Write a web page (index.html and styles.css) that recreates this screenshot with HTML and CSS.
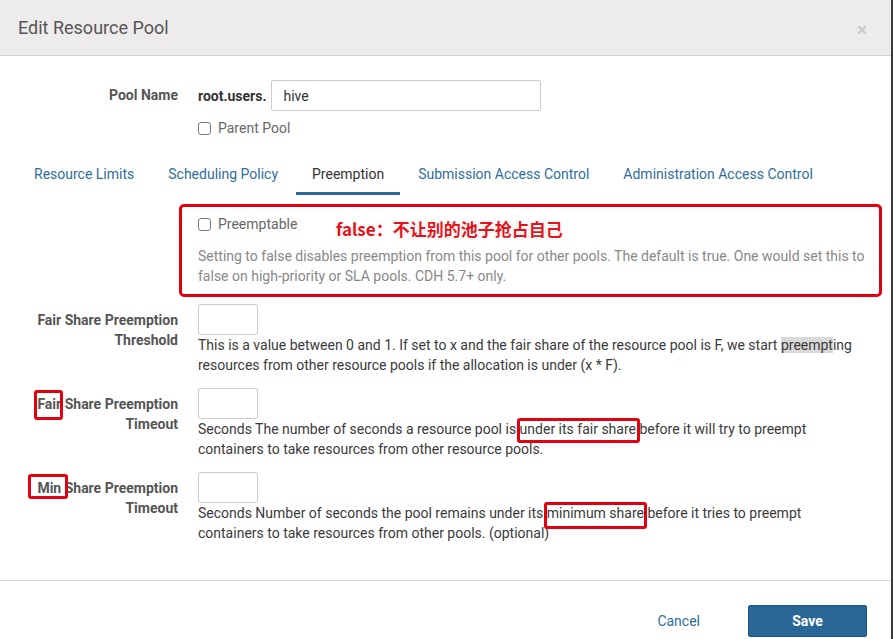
FILE: index.html
```html
<!DOCTYPE html>
<html lang="en">
<head>
<meta charset="utf-8">
<title>Edit Resource Pool</title>
<link rel="stylesheet" href="styles.css">
</head>
<body>
<div class="modal">
  <div class="modal-header">
    <h4 class="modal-title">Edit Resource Pool</h4>
    <span class="close">&times;</span>
  </div>
  <div class="modal-body">
    <div class="form-row">
      <label class="row-label pool-label">Pool Name</label>
      <div class="row-content">
        <div class="name-line">
          <span class="prefix">root.users.</span>
          <input class="text-input name-input" type="text" value="hive">
        </div>
        <label class="check check-parent"><span class="box"></span>Parent Pool</label>
      </div>
    </div>

    <ul class="tabs">
      <li><a class="tab">Resource Limits</a></li>
      <li><a class="tab">Scheduling Policy</a></li>
      <li><a class="tab active">Preemption</a></li>
      <li><a class="tab">Submission Access Control</a></li>
      <li><a class="tab">Administration Access Control</a></li>
    </ul>

    <div class="annot-box">
      <label class="check"><span class="box"></span>Preemptable</label>
      <span class="annot-text">false：不让别的池子抢占自己</span>
      <p class="muted-help">Setting to false disables preemption from this pool for other pools. The default is true. One would set this to false on high-priority or SLA pools. CDH 5.7+ only.</p>
    </div>

    <div class="fields">
      <div class="form-row field-row">
        <label class="row-label">Fair Share Preemption Threshold</label>
        <div class="row-content">
          <input class="text-input small-input" type="text">
          <p class="help">This is a value between 0 and 1. If set to x and the fair share of the resource pool is F, we start <span class="hl">preempt</span>ing resources from other resource pools if the allocation is under (x * F).</p>
        </div>
      </div>
      <div class="form-row field-row">
        <label class="row-label"><span class="mark mark-fair">Fair</span> Share Preemption Timeout</label>
        <div class="row-content">
          <input class="text-input small-input" type="text">
          <p class="help">Seconds The number of seconds a resource pool is <span class="mark mark-under">under its fair share</span> before it will try to preempt containers to take resources from other resource pools.</p>
        </div>
      </div>
      <div class="form-row field-row">
        <label class="row-label"><span class="mark mark-min">Min</span> Share Preemption Timeout</label>
        <div class="row-content">
          <input class="text-input small-input" type="text">
          <p class="help">Seconds Number of seconds the pool remains under its <span class="mark mark-minimum">minimum share</span> before it tries to preempt containers to take resources from other pools. (optional)</p>
        </div>
      </div>
    </div>
  </div>
  <div class="modal-footer">
    <a class="btn-link">Cancel</a>
    <button class="btn-primary" type="button">Save</button>
  </div>
</div>
</body>
</html>
```

FILE: styles.css
```css
* { box-sizing: border-box; }
html, body { margin: 0; padding: 0; }
body {
  font-family: Roboto, "Noto Sans", "Liberation Sans", sans-serif;
  font-size: 14px;
  color: #333;
  background: #fff;
  width: 893px;
  height: 639px;
  overflow: hidden;
}
.modal {
  width: 893px;
  height: 639px;
  border-right: 2px solid #3c3c3c;
  display: flex;
  flex-direction: column;
}
.modal-header {
  height: 56px;
  flex: none;
  background: #edebec;
  border-bottom: 1px solid #d2d2d2;
  display: flex;
  align-items: center;
  justify-content: space-between;
  padding: 0 24px 0 18px;
}
.modal-title {
  margin: 0;
  font-size: 18px;
  font-weight: 400;
  color: #555;
  line-height: 24px;
}
.close {
  font-size: 19px;
  font-weight: 700;
  color: #cacaca;
  line-height: 1;
  margin-top: 4px;
}
.modal-body {
  flex: 1;
  padding-top: 24px;
}
.form-row {
  display: flex;
  align-items: flex-start;
}
.row-label {
  flex: none;
  width: 178px;
  padding-left: 30px;
  margin-right: 20px;
  text-align: right;
  font-weight: 700;
  font-size: 14px;
  color: #555;
  line-height: 20px;
}
.pool-label { line-height: 31px; }
.row-content { flex: 1; }
.field-row .row-content { padding-right: 30px; }
.name-line {
  display: flex;
  align-items: center;
}
.prefix {
  font-weight: 700;
  color: #333;
  font-size: 14px;
  margin-right: 4px;
}
.text-input {
  display: block;
  height: 31px;
  border: 1px solid #cbcbcb;
  border-radius: 2px;
  background: #fff;
  font-family: inherit;
  font-size: 14px;
  color: #333;
  outline: none;
}
.name-input {
  width: 270px;
  padding: 0 12px;
}
.small-input {
  width: 60px;
  padding: 0 6px;
}
.check {
  display: flex;
  align-items: center;
  height: 20px;
  font-size: 14px;
  color: #666;
}
.check-parent { margin-top: 7px; }
.box {
  width: 13px;
  height: 13px;
  border: 1px solid #7a7a7a;
  border-radius: 3px;
  background: #fff;
  margin-right: 7px;
}
.tabs {
  list-style: none;
  margin: 12px 0 0;
  padding: 0 0 0 18px;
  display: flex;
}
.tab {
  display: block;
  padding: 14px 16px 8px;
  line-height: 20px;
  margin-right: 2px;
  border-bottom: 3px solid transparent;
  font-size: 14px;
  color: #2f6d9b;
}
.tab.active {
  color: #333;
  border-bottom-color: #2a6a96;
}
.annot-box {
  position: relative;
  margin: 9px 0 0 179px;
  width: 703px;
  border: 3px solid #e3000f;
  border-radius: 5px;
  padding: 7px 4px 8px 16px;
}
.annot-text {
  position: absolute;
  left: 154px;
  top: 10px;
  font-family: "Noto Sans CJK SC", "Noto Sans", sans-serif;
  font-size: 17px;
  font-weight: 700;
  line-height: 24px;
  color: #e5121a;
  text-shadow: 1px 1px 0 #fff, -1px -1px 0 #fff, 1px -1px 0 #fff, -1px 1px 0 #fff,
    0 0 3px rgba(0,0,0,0.35);
}
.muted-help {
  margin: 12px 0 0;
  line-height: 20px;
  color: #888;
  font-size: 14px;
}
.fields { margin-top: 7px; }
.field-row { margin-bottom: 13px; }
.field-row .row-label { padding-top: 6px; }
.help {
  margin: 0;
  line-height: 20px;
  color: #3a3a3a;
  font-size: 14px;
}
.hl { background: #d9d9d9; }
.mark {
  position: relative;
  display: inline-block;
  line-height: 20px;
}
.mark::after {
  content: "";
  position: absolute;
  border: 3px solid #e3000f;
  border-radius: 3px;
}
.mark-fair::after { left: -3px; right: -2px; top: -4px; bottom: -6px; }
.mark-min::after { left: -9px; right: -7px; top: -4px; bottom: -1px; }
.mark-under::after { left: -3px; right: -4px; top: -1px; bottom: -4px; }
.mark-minimum::after { left: -3px; right: -3px; top: -1px; bottom: -6px; }
.modal-footer {
  flex: none;
  height: 59px;
  border-top: 1px solid #d9d9d9;
  padding: 24px 24px 0;
  display: flex;
  justify-content: flex-end;
  align-items: flex-start;
}
.btn-link {
  font-size: 14px;
  line-height: 32px;
  padding: 0 16px;
  margin-right: 32px;
  color: #2f6d9b;
}
.btn-primary {
  width: 119px;
  height: 32px;
  background: #2a6799;
  border: 1px solid #1d5380;
  border-radius: 2px;
  color: #fff;
  font-family: inherit;
  font-size: 14px;
  font-weight: 700;
}
```
